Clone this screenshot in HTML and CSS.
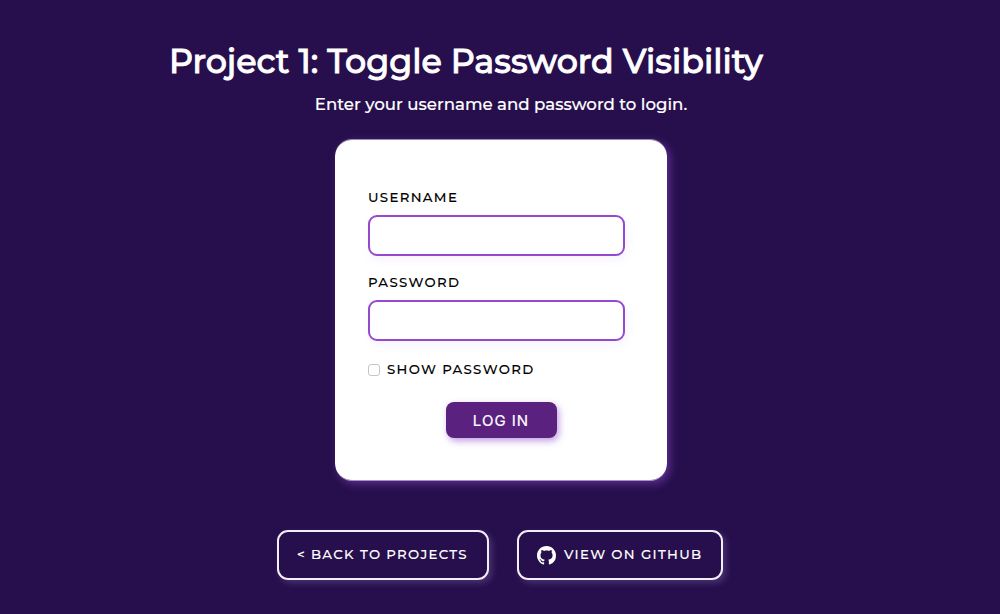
FILE: index.html
```html
<!DOCTYPE html>
<html lang="en">
<head>
<meta charset="utf-8">
<title>Toggle Password Visibility</title>
<link rel="stylesheet" href="styles.css">
</head>
<body>
<main class="page">
  <h1 class="title">Project 1: Toggle Password Visibility</h1>
  <p class="intro">Enter your username and password to login.</p>
  <form class="card">
    <label class="label label-user" for="username">Username</label>
    <input class="field" id="username" type="text">
    <label class="label label-pass" for="password">Password</label>
    <input class="field" id="password" type="password">
    <div class="toggle">
      <input class="check" id="show" type="checkbox">
      <label class="label label-show" for="show">Show password</label>
    </div>
    <button class="submit" type="button">Log in</button>
  </form>
  <nav class="links">
    <a class="link link-back"><span>&lt; Back to projects</span></a>
    <a class="link link-github">
      <svg class="icon" viewBox="0 0 16 16" aria-hidden="true"><path fill="currentColor" d="M8 0C3.58 0 0 3.58 0 8c0 3.54 2.29 6.53 5.47 7.59.4.07.55-.17.55-.38 0-.19-.01-.82-.01-1.49-2.01.37-2.53-.49-2.69-.94-.09-.23-.48-.94-.82-1.13-.28-.15-.68-.52-.01-.53.63-.01 1.08.58 1.23.82.72 1.21 1.87.87 2.33.66.07-.52.28-.87.51-1.07-1.78-.2-3.64-.89-3.64-3.95 0-.87.31-1.59.82-2.15-.08-.2-.36-1.02.08-2.12 0 0 .67-.21 2.2.82.64-.18 1.32-.27 2-.27s1.36.09 2 .27c1.53-1.04 2.2-.82 2.2-.82.44 1.1.16 1.92.08 2.12.51.56.82 1.27.82 2.15 0 3.07-1.87 3.75-3.65 3.95.29.25.54.73.54 1.48 0 1.07-.01 1.93-.01 2.2 0 .21.15.46.55.38A8.01 8.01 0 0 0 16 8c0-4.42-3.58-8-8-8z"/></svg>
      <span>View on GitHub</span>
    </a>
  </nav>
</main>
</body>
</html>
```
FILE: styles.css
```css
* { box-sizing: border-box; }
body {
  margin: 0;
  background: #270f4d;
  color: #fff;
  font-family: Montserrat, Inter, "Open Sans", sans-serif;
  font-weight: 500;
}
.page {
  height: 614px;
  display: flex;
  flex-direction: column;
  align-items: center;
  overflow: hidden;
}
.title {
  align-self: flex-start;
  margin: 38px 0 0 169px;
  font-size: 33.3px;
  line-height: 46px;
  font-weight: 500;
  -webkit-text-stroke: .9px #fff;
  white-space: nowrap;
}
.intro {
  margin: 9px 0 0 2px;
  font-size: 16.6px;
  line-height: 22px;
  -webkit-text-stroke: .15px #fff;
  white-space: nowrap;
}
.card {
  width: 332px;
  height: 342px;
  margin: 24px 0 0 2px;
  padding: 47px 42px 0 33px;
  display: flex;
  flex-direction: column;
  background: #fff;
  background-clip: padding-box;
  border: 0 solid rgba(255, 255, 255, .5);
  border-width: 1px 0;
  border-radius: 17px;
  box-shadow: 3px 3px 8px rgba(146, 75, 207, .5);
}
.label {
  color: #000;
  font-size: 13.3px;
  line-height: 20px;
  letter-spacing: 1.33px;
  -webkit-text-stroke: .1px #000;
  text-transform: uppercase;
  white-space: nowrap;
}
.field {
  width: 257px;
  height: 41px;
  margin: 8px 0 16px;
  padding: 0 10px;
  border: 2px solid #9549cf;
  border-radius: 9px;
  outline: 0;
  box-shadow: 2px 4px 10px rgba(146, 75, 207, .07);
}
.toggle {
  height: 20px;
  margin-top: 2px;
  display: flex;
  align-items: center;
}
.check {
  appearance: none;
  width: 12px;
  height: 12px;
  margin: 2px 7px 0 0;
  background: #fff;
  border: 1px solid #c6c6c6;
  border-radius: 3px;
}
.submit {
  width: 111px;
  height: 36px;
  margin: 23px 0 0 77.5px;
  padding: 1px 0 0;
  border: 0;
  border-radius: 8px;
  background: #5a217f;
  color: #fff;
  font: 400 15px Inter, sans-serif;
  letter-spacing: 1px;
  -webkit-text-stroke: .2px #fff;
  text-transform: uppercase;
  box-shadow: 2px 3px 7px rgba(146, 75, 207, .55);
}
.links {
  margin-top: 49px;
  display: flex;
  gap: 28px;
}
.link {
  height: 50px;
  display: flex;
  align-items: center;
  border: 2px solid #f3edf8;
  border-radius: 11px;
  font-size: 13.3px;
  letter-spacing: 1.33px;
  line-height: 20px;
  -webkit-text-stroke: .1px #fff;
  text-transform: uppercase;
  white-space: nowrap;
  box-shadow: 3px 3px 6px rgba(205, 175, 235, .22);
}
.link span { margin-top: -2px; }
.link-back { width: 212px; padding-left: 18px; }
.link-github { width: 206px; padding-left: 18px; }
.icon { width: 19px; height: 19px; margin-right: 8px; }
```
